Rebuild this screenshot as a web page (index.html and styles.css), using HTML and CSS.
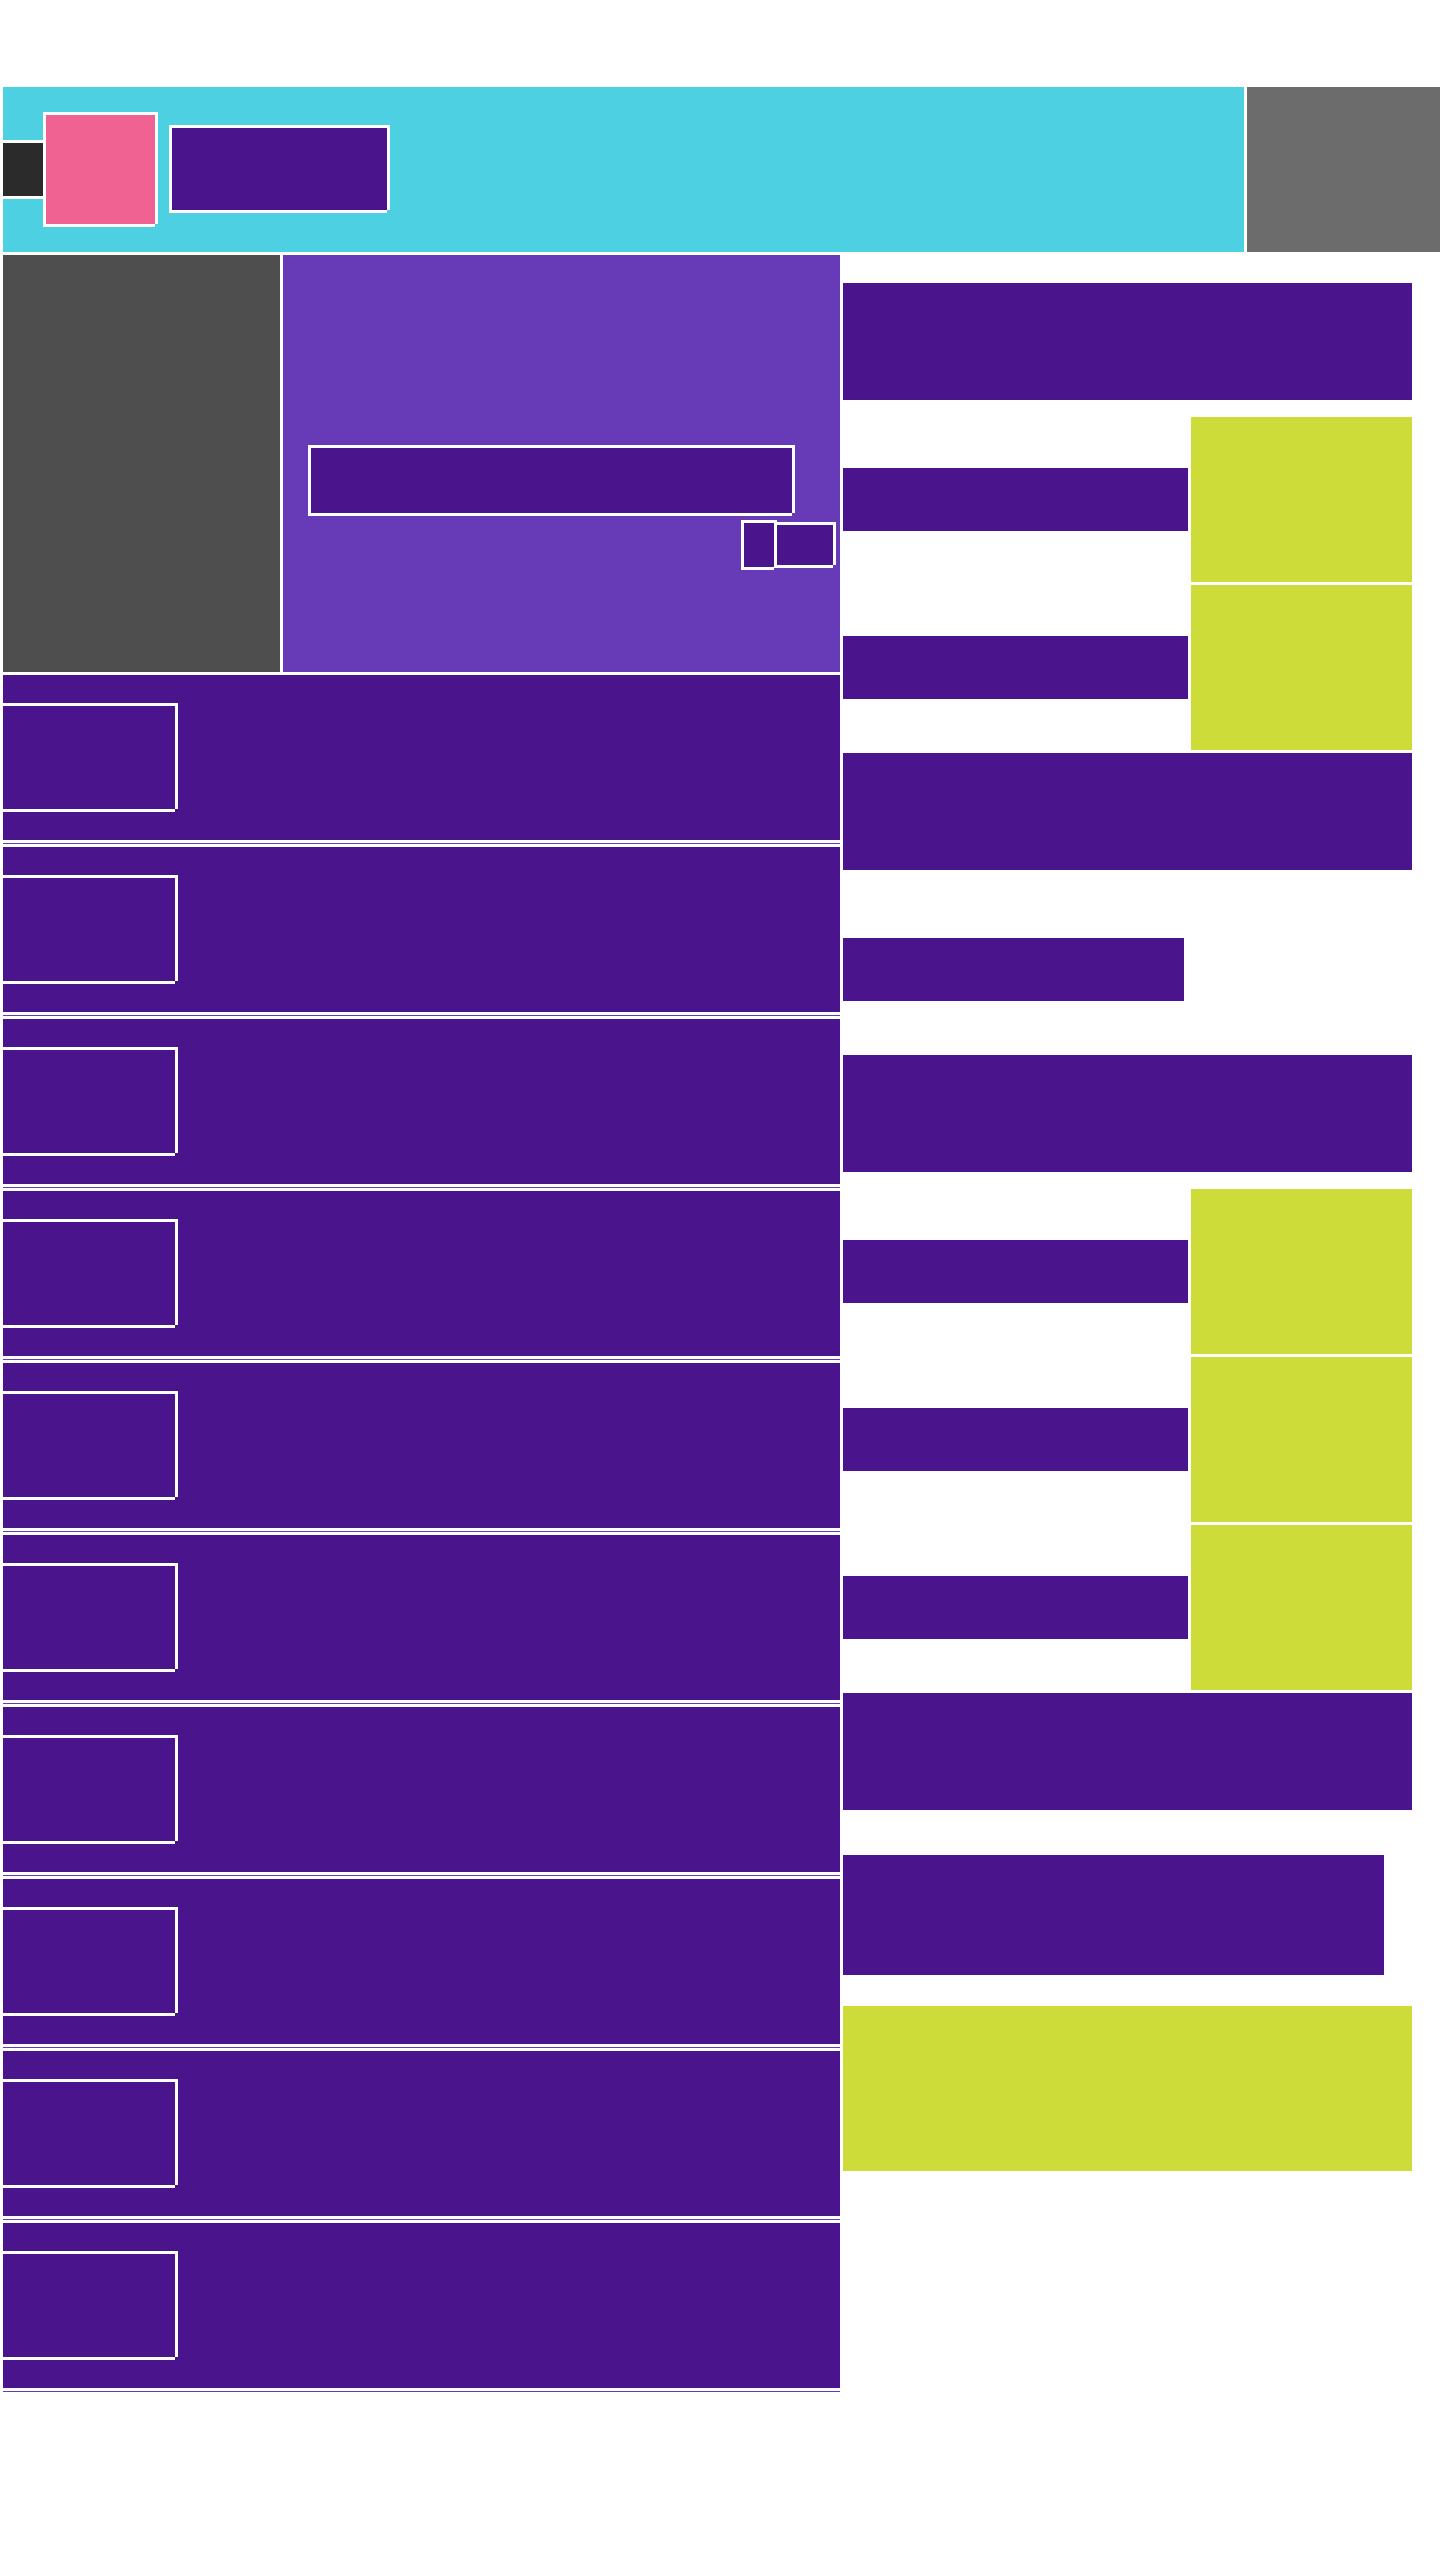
FILE: index.html
```html
<!DOCTYPE html>
<html lang="en">
<head>
<meta charset="utf-8">
<title>Layout</title>
<link rel="stylesheet" href="styles.css">
</head>
<body>
<div class="page">
  <header class="topbar">
    <div class="brand">
      <div class="menu-btn" aria-label="Menu"></div>
      <div class="logo frame" aria-label="Logo"></div>
      <div class="site-title frame" aria-label="Site title"></div>
    </div>
    <div class="account" aria-label="Account"></div>
  </header>

  <div class="main">
    <div class="content">
      <section class="hero">
        <div class="hero-media"></div>
        <div class="hero-panel">
          <div class="search frame"></div>
          <div class="hero-actions">
            <div class="btn-a frame"></div>
            <div class="btn-b frame"></div>
          </div>
        </div>
      </section>

      <ul class="feed">
        <li class="feed-item"><div class="feed-card"><div class="thumb"></div></div></li>
        <li class="feed-item"><div class="feed-card"><div class="thumb"></div></div></li>
        <li class="feed-item"><div class="feed-card"><div class="thumb"></div></div></li>
        <li class="feed-item"><div class="feed-card"><div class="thumb"></div></div></li>
        <li class="feed-item"><div class="feed-card"><div class="thumb"></div></div></li>
        <li class="feed-item"><div class="feed-card"><div class="thumb"></div></div></li>
        <li class="feed-item"><div class="feed-card"><div class="thumb"></div></div></li>
        <li class="feed-item"><div class="feed-card"><div class="thumb"></div></div></li>
        <li class="feed-item"><div class="feed-card"><div class="thumb"></div></div></li>
        <li class="feed-item"><div class="feed-card"><div class="thumb"></div></div></li>
      </ul>
    </div>

    <aside class="sidebar">
      <div class="block"></div>
      <div class="rows">
        <div class="row"><div class="row-text"></div><div class="row-thumb"></div></div>
        <div class="row"><div class="row-text"></div><div class="row-thumb"></div></div>
      </div>
      <div class="block gap-3"></div>
      <div class="lone-bar"></div>
      <div class="block gap-54"></div>
      <div class="rows">
        <div class="row"><div class="row-text"></div><div class="row-thumb"></div></div>
        <div class="row"><div class="row-text"></div><div class="row-thumb"></div></div>
        <div class="row"><div class="row-text"></div><div class="row-thumb"></div></div>
      </div>
      <div class="block gap-3"></div>
      <div class="block-narrow"></div>
      <div class="promo"></div>
    </aside>
  </div>
</div>
</body>
</html>
```

FILE: styles.css
```css
* { box-sizing: border-box; }

body {
  margin: 0;
  background: #ffffff;
  font-family: "Liberation Sans", Arial, sans-serif;
}

.page {
  padding: 87px 0 0 3px;
}

/* white frame: top/left border plus offset right/bottom strips */
.frame {
  border-top: 3px solid #ffffff;
  border-left: 3px solid #ffffff;
  box-shadow: 3px 0 0 #ffffff, 0 3px 0 #ffffff;
  margin-bottom: 3px;
}

/* ---------- header ---------- */
.topbar {
  display: flex;
  gap: 3px;
  height: 165px;
}

.brand {
  width: 1241px;
  background: #4dd0e1;
  display: flex;
  align-items: center;
}

.menu-btn {
  width: 40px;
  height: 59px;
  background: #2b2b2b;
  border-top: 3px solid #ffffff;
  border-bottom: 3px solid #ffffff;
}

.logo {
  width: 112px;
  height: 112px;
  background: #f06292;
}

.site-title {
  width: 218px;
  height: 85px;
  margin-left: 14px;
  margin-bottom: 4px;
  background: #4a148c;
}

.account {
  flex: 1;
  background: #6c6c6c;
}

/* ---------- main ---------- */
.main {
  display: flex;
  gap: 3px;
  margin-top: 3px;
}

.content {
  width: 837px;
}

.hero {
  display: flex;
  gap: 3px;
  height: 417px;
}

.hero-media {
  width: 277px;
  background: #4e4e4e;
}

.hero-panel {
  flex: 1;
  background: #673ab7;
  padding: 190px 7px 0 25px;
}

.search {
  width: 484px;
  height: 68px;
  background: #4a148c;
}

.hero-actions {
  display: flex;
  justify-content: flex-end;
  align-items: center;
  margin-top: 7px;
}

.btn-a {
  width: 33px;
  height: 47px;
  background: #4a148c;
}

.btn-b {
  width: 59px;
  height: 43px;
  background: #4a148c;
}

/* ---------- feed ---------- */
.feed {
  list-style: none;
  margin: 0;
  padding: 0;
}

.feed-item {
  padding-top: 3px;
}

.feed-item::after {
  content: "";
  display: block;
  height: 1px;
  margin-top: 3px;
  background: #673ab7;
}

.feed-card {
  height: 165px;
  background: #4a148c;
  display: flex;
  align-items: center;
}

.thumb {
  width: 172px;
  height: 106px;
  border-top: 3px solid #ffffff;
  box-shadow: 3px 0 0 #ffffff, 0 3px 0 #ffffff;
  margin-bottom: 3px;
}

/* ---------- sidebar ---------- */
.sidebar {
  width: 569px;
  padding-top: 28px;
}

.block {
  height: 117px;
  background: #4a148c;
}

.gap-3 { margin-top: 3px; }
.gap-54 { margin-top: 54px; }

.rows {
  margin-top: 17px;
  display: flex;
  flex-direction: column;
  gap: 3px;
}

.row {
  display: flex;
  align-items: center;
  gap: 3px;
  height: 165px;
}

.row-text {
  width: 345px;
  height: 63px;
  background: #4a148c;
}

.row-thumb {
  width: 221px;
  height: 165px;
  background: #cddc39;
}

.lone-bar {
  width: 341px;
  height: 63px;
  margin-top: 68px;
  background: #4a148c;
}

.block-narrow {
  width: 541px;
  height: 120px;
  margin-top: 45px;
  background: #4a148c;
}

.promo {
  width: 569px;
  height: 165px;
  margin-top: 31px;
  background: #cddc39;
}
```
